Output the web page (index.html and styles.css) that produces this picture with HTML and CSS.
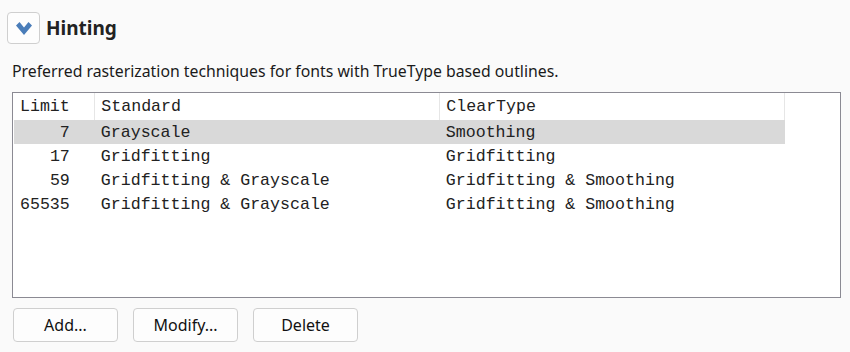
FILE: index.html
```html
<!DOCTYPE html>
<html lang="en">
<head>
    <meta charset="UTF-8">
    <title>Hinting</title>
    <link rel="stylesheet" href="styles.css">
</head>
<body>
    <div class="section">
        <div class="section-head">
            <button class="toggle" aria-label="Collapse">
                <svg width="16" height="16" viewBox="0 0 16 16">
                    <polygon points="0,5.5 3.5,2 8,7.5 12.5,2 16,5.5 8,15" fill="#4a7db9"/>
                </svg>
            </button>
            <h2>Hinting</h2>
        </div>
        <p class="desc">Preferred rasterization techniques for fonts with TrueType based outlines.</p>
        <div class="list">
            <table>
                <thead>
                    <tr>
                        <th class="col-limit">Limit</th>
                        <th class="col-std">Standard</th>
                        <th class="col-ct">ClearType</th>
                    </tr>
                </thead>
                <tbody>
                    <tr class="selected">
                        <td class="num">7</td>
                        <td>Grayscale</td>
                        <td>Smoothing</td>
                    </tr>
                    <tr>
                        <td class="num">17</td>
                        <td>Gridfitting</td>
                        <td>Gridfitting</td>
                    </tr>
                    <tr>
                        <td class="num">59</td>
                        <td>Gridfitting &amp; Grayscale</td>
                        <td>Gridfitting &amp; Smoothing</td>
                    </tr>
                    <tr>
                        <td class="num">65535</td>
                        <td>Gridfitting &amp; Grayscale</td>
                        <td>Gridfitting &amp; Smoothing</td>
                    </tr>
                </tbody>
            </table>
        </div>
        <div class="buttons">
            <button class="btn">Add...</button>
            <button class="btn">Modify...</button>
            <button class="btn">Delete</button>
        </div>
    </div>
</body>
</html>
```

FILE: styles.css
```css
body {
    margin: 0;
    background: #fafafa;
    font-family: "Noto Sans", "Open Sans", sans-serif;
    color: #1a1a1a;
}

.section {
    padding: 12px 0 0 7px;
}

.section-head {
    display: flex;
    align-items: center;
    gap: 6px;
}

.toggle {
    width: 33px;
    height: 32px;
    padding: 0;
    display: flex;
    align-items: center;
    justify-content: center;
    background: #fdfdfd;
    border: 1px solid #cfcfcf;
    border-radius: 4px;
}

.section-head h2 {
    margin: 0;
    font-size: 19px;
    font-weight: bold;
    color: #222;
}

.desc {
    margin: 17px 0 0 5px;
    font-size: 15.8px;
    line-height: 20px;
}

.list {
    margin: 11px 0 0 5px;
    width: 826px;
    height: 204px;
    padding: 0 0 0 1px;
    box-sizing: content-box;
    background: #fff;
    border: 1px solid #8b8a93;
}

table {
    border-collapse: collapse;
    font-family: "Liberation Mono", "Courier New", monospace;
    font-size: 16.6px;
    color: #222;
}

th, td {
    padding: 0 6px;
    text-align: left;
    white-space: nowrap;
}

th {
    height: 27px;
    font-weight: normal;
    border-right: 1px solid #e6e6e6;
}

td {
    height: 24px;
}

.col-limit { width: 68px; }
.col-std, .col-ct { width: 332px; }

td.num {
    text-align: right;
    padding-right: 25px;
}

tr.selected td {
    background: #d9d9d9;
}

.buttons {
    display: flex;
    gap: 15px;
    margin: 10px 0 0 6px;
}

.btn {
    width: 105px;
    height: 34px;
    font-family: "Noto Sans", "Open Sans", sans-serif;
    font-size: 16px;
    color: #111;
    background: #fdfdfd;
    border: 1px solid #cfcfcf;
    border-radius: 4px;
}
```
